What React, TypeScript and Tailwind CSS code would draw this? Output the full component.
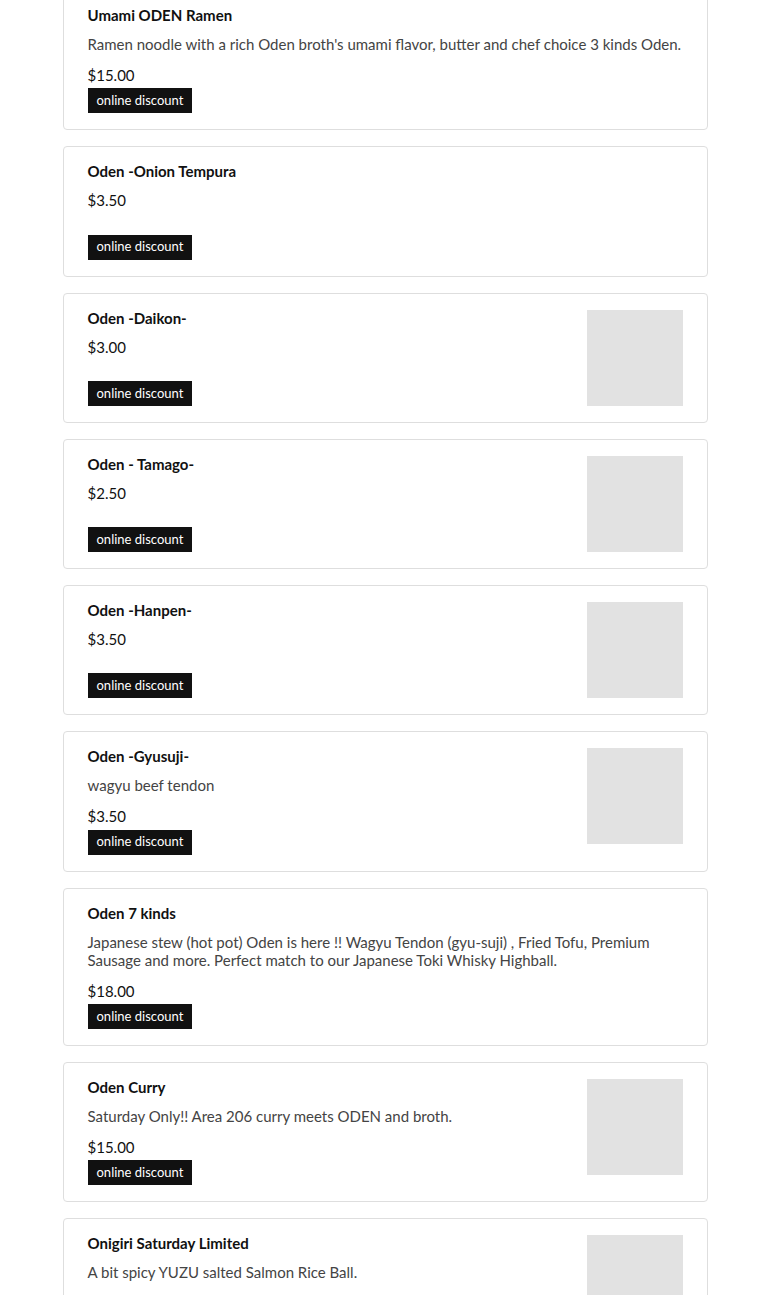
import React from 'react';

type Item = {
  name: string;
  desc?: string;
  price: string;
  image?: boolean;
};

const items: Item[] = [
  {
    name: 'Umami ODEN Ramen',
    desc: "Ramen noodle with a rich Oden broth's umami flavor, butter and chef choice 3 kinds Oden.",
    price: '$15.00',
  },
  { name: 'Oden -Onion Tempura', price: '$3.50' },
  { name: 'Oden -Daikon-', price: '$3.00', image: true },
  { name: 'Oden - Tamago-', price: '$2.50', image: true },
  { name: 'Oden -Hanpen-', price: '$3.50', image: true },
  { name: 'Oden -Gyusuji-', desc: 'wagyu beef tendon', price: '$3.50', image: true },
  {
    name: 'Oden 7 kinds',
    desc: 'Japanese stew (hot pot) Oden is here !! Wagyu Tendon (gyu-suji) , Fried Tofu, Premium Sausage and more. Perfect match to our Japanese Toki Whisky Highball.',
    price: '$18.00',
  },
  {
    name: 'Oden Curry',
    desc: 'Saturday Only!! Area 206 curry meets ODEN and broth.',
    price: '$15.00',
    image: true,
  },
  {
    name: 'Onigiri Saturday Limited',
    desc: 'A bit spicy YUZU salted Salmon Rice Ball.',
    price: '$5.00',
    image: true,
  },
];

function MenuCard({ item }: { item: Item }) {
  return (
    <div className="bg-white border border-[#dedede] rounded-[4px] px-6 py-4 flex gap-6">
      <div className="flex-1 min-w-0 min-h-[96.25px] flex flex-col">
        <p className="text-[15px] leading-[17px] font-bold text-[#111]">{item.name}</p>
        {item.desc && (
          <p className="mt-[11px] text-[15px] leading-[18px] text-[#444]">{item.desc}</p>
        )}
        <p className={`${item.desc ? 'mt-[12px]' : 'mt-[10px]'} text-[15px] leading-5 text-[#111]`}>
          {item.price}
        </p>
        <div className="mt-auto pt-[2px]">
          <span className="inline-flex items-center h-[25px] px-[9px] bg-[#111] text-white text-[13px]">
            online discount
          </span>
        </div>
      </div>
      {item.image && <div className="w-24 h-24 shrink-0 bg-[#e2e2e2]" />}
    </div>
  );
}

export default function App() {
  return (
    <div className="bg-white font-['Lato',sans-serif] overflow-hidden h-[1295px]">
      <div className="w-[645px] mx-auto -mt-[10px] flex flex-col gap-4">
        {items.map(item => (
          <MenuCard key={item.name} item={item} />
        ))}
      </div>
    </div>
  );
}
